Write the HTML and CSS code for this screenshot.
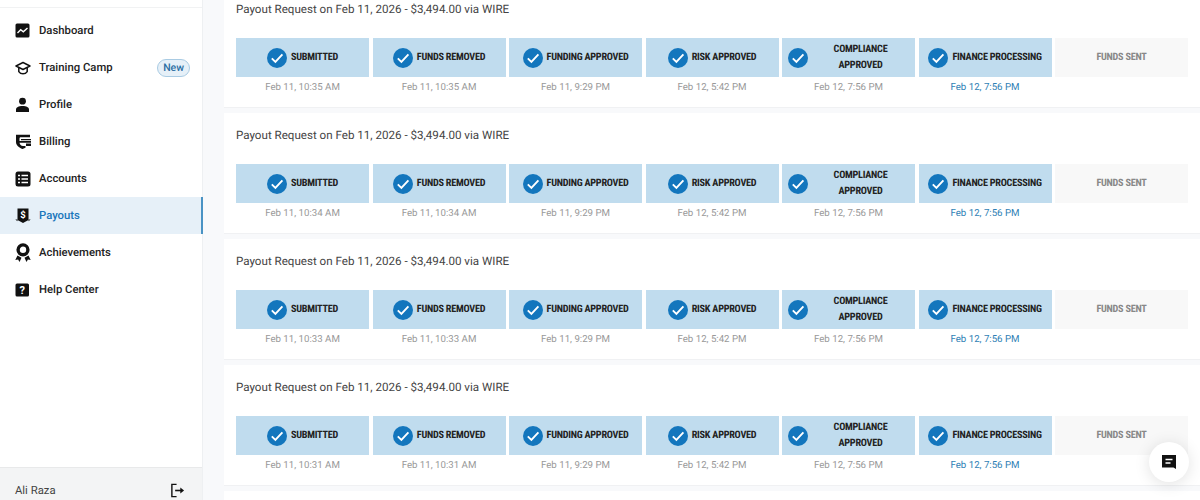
FILE: index.html

```html
<!DOCTYPE html>
<html lang="en">
<head>
    <meta charset="UTF-8">
    <title>Payouts</title>
    <link rel="stylesheet" href="styles.css">
</head>
<body>
    <svg class="defs" width="0" height="0">
        <symbol id="check" viewBox="0 0 20 20">
            <circle cx="10" cy="10" r="10" fill="#1376bd"/>
            <path d="M4.800 10.400l3.600 3.500L15.400 6.400" fill="none" stroke="#fff" stroke-width="1.900"/>
        </symbol>
    </svg>

    <div class="app">
        <aside class="sidebar">
            <div class="sidebar-top"></div>
            <nav class="nav">
                <a class="nav-item">
                    <svg class="nav-icon" viewBox="0 0 16 16"><rect x="0.500" y="0.500" width="14" height="14" rx="1.500" fill="#111"/><path d="M2.500 10l3.200-3.200 2.600 2L12.500 5" fill="none" stroke="#fff" stroke-width="1.400"/></svg>
                    <span>Dashboard</span>
                </a>
                <a class="nav-item">
                    <svg class="nav-icon" viewBox="0 0 16 16"><path d="M8 2.500L1 6l7 3.500L15 6z" fill="none" stroke="#111" stroke-width="1.500" stroke-linejoin="round"/><path d="M3.800 8v3.600c1 1.500 2.600 2.200 4.200 2.200s3.200-.7 4.200-2.200V8" fill="none" stroke="#111" stroke-width="1.500"/></svg>
                    <span>Training Camp</span>
                    <span class="badge">New</span>
                </a>
                <a class="nav-item">
                    <svg class="nav-icon" viewBox="0 0 16 16"><circle cx="7.500" cy="4.200" r="3.400" fill="#111"/><path d="M1 15v-2.500C1 10.300 3.500 9 7.500 9s6.500 1.300 6.500 3.500V15z" fill="#111"/></svg>
                    <span>Profile</span>
                </a>
                <a class="nav-item">
                    <svg class="nav-icon" viewBox="0 0 16 16"><path d="M15 2.500V0.800H1V8c0 3.200 3 5.600 6.500 7l3-1.300V12H8C6 12 4.800 10.500 4.500 8.800H16V7H4.500V4.500C4.500 3.500 5 3.200 6 3.200H15z" fill="#111"/><path d="M6 5h10v1.300H6zM11 9.500h5V12h-5z" fill="#111"/></svg>
                    <span>Billing</span>
                </a>
                <a class="nav-item">
                    <svg class="nav-icon" viewBox="0 0 16 16"><rect x="0.500" y="0.500" width="15" height="15" rx="2.500" fill="#111"/><path d="M3 4.500h2M3 8h2M3 11.500h2M6.500 4.500h6.500M6.500 8h6.500M6.500 11.500h6.500" stroke="#fff" stroke-width="1.500"/></svg>
                    <span>Accounts</span>
                </a>
                <a class="nav-item active">
                    <svg class="nav-icon" viewBox="0 0 16 16"><path d="M2.500 0.500h11v11.500L8 15l-5.500-3z" fill="#111"/><path d="M0.300 11.500h2.200v1.700zM15.700 11.500h-2.200v1.700z" fill="#111"/><text class="glyph" x="8" y="10.300" font-size="9.500">$</text></svg>
                    <span>Payouts</span>
                </a>
                <a class="nav-item">
                    <svg class="nav-icon tall" viewBox="0 0 16 19"><circle cx="8" cy="6.800" r="4.900" fill="none" stroke="#111" stroke-width="3.400"/><path d="M2.500 12.500L0.300 17l2.800-.4L4.500 19l2-4.200zM13.500 12.500l2.200 4.500-2.800-.4-1.400 2.400-2-4.200z" fill="#111"/></svg>
                    <span>Achievements</span>
                </a>
                <a class="nav-item">
                    <svg class="nav-icon" viewBox="0 0 16 16"><rect x="0.500" y="1.500" width="13.500" height="13" rx="1.500" fill="#111"/><text class="glyph" x="7.200" y="12" font-size="11">?</text></svg>
                    <span>Help Center</span>
                </a>
            </nav>
            <div class="user-bar">
                <span>Ali Raza</span>
                <svg class="logout" viewBox="0 0 16 16"><path d="M7 1.500H2v13h5" fill="none" stroke="#111" stroke-width="1.500"/><path d="M5.500 8h6.500" stroke="#111" stroke-width="1.700"/><path d="M11 4.800L15 8l-4 3.200z" fill="#111"/></svg>
            </div>
        </aside>

        <main class="main">
            <section class="card">
                <h3 class="card-title">Payout Request on Feb 11, 2026 - $3,494.00 via WIRE</h3>
                <div class="steps">
                    <div class="step"><div class="tile"><svg class="check"><use href="#check"/></svg><span>SUBMITTED</span></div><p class="date">Feb 11, 10:35 AM</p></div>
                    <div class="step"><div class="tile"><svg class="check"><use href="#check"/></svg><span>FUNDS REMOVED</span></div><p class="date">Feb 11, 10:35 AM</p></div>
                    <div class="step"><div class="tile"><svg class="check"><use href="#check"/></svg><span>FUNDING APPROVED</span></div><p class="date">Feb 11, 9:29 PM</p></div>
                    <div class="step"><div class="tile"><svg class="check"><use href="#check"/></svg><span>RISK APPROVED</span></div><p class="date">Feb 12, 5:42 PM</p></div>
                    <div class="step"><div class="tile wrap"><svg class="check"><use href="#check"/></svg><span>COMPLIANCE APPROVED</span></div><p class="date">Feb 12, 7:56 PM</p></div>
                    <div class="step"><div class="tile"><svg class="check"><use href="#check"/></svg><span>FINANCE PROCESSING</span></div><p class="date current">Feb 12, 7:56 PM</p></div>
                    <div class="step"><div class="tile pending"><span>FUNDS SENT</span></div></div>
                </div>
            </section>

            <section class="card">
                <h3 class="card-title">Payout Request on Feb 11, 2026 - $3,494.00 via WIRE</h3>
                <div class="steps">
                    <div class="step"><div class="tile"><svg class="check"><use href="#check"/></svg><span>SUBMITTED</span></div><p class="date">Feb 11, 10:34 AM</p></div>
                    <div class="step"><div class="tile"><svg class="check"><use href="#check"/></svg><span>FUNDS REMOVED</span></div><p class="date">Feb 11, 10:34 AM</p></div>
                    <div class="step"><div class="tile"><svg class="check"><use href="#check"/></svg><span>FUNDING APPROVED</span></div><p class="date">Feb 11, 9:29 PM</p></div>
                    <div class="step"><div class="tile"><svg class="check"><use href="#check"/></svg><span>RISK APPROVED</span></div><p class="date">Feb 12, 5:42 PM</p></div>
                    <div class="step"><div class="tile wrap"><svg class="check"><use href="#check"/></svg><span>COMPLIANCE APPROVED</span></div><p class="date">Feb 12, 7:56 PM</p></div>
                    <div class="step"><div class="tile"><svg class="check"><use href="#check"/></svg><span>FINANCE PROCESSING</span></div><p class="date current">Feb 12, 7:56 PM</p></div>
                    <div class="step"><div class="tile pending"><span>FUNDS SENT</span></div></div>
                </div>
            </section>

            <section class="card">
                <h3 class="card-title">Payout Request on Feb 11, 2026 - $3,494.00 via WIRE</h3>
                <div class="steps">
                    <div class="step"><div class="tile"><svg class="check"><use href="#check"/></svg><span>SUBMITTED</span></div><p class="date">Feb 11, 10:33 AM</p></div>
                    <div class="step"><div class="tile"><svg class="check"><use href="#check"/></svg><span>FUNDS REMOVED</span></div><p class="date">Feb 11, 10:33 AM</p></div>
                    <div class="step"><div class="tile"><svg class="check"><use href="#check"/></svg><span>FUNDING APPROVED</span></div><p class="date">Feb 11, 9:29 PM</p></div>
                    <div class="step"><div class="tile"><svg class="check"><use href="#check"/></svg><span>RISK APPROVED</span></div><p class="date">Feb 12, 5:42 PM</p></div>
                    <div class="step"><div class="tile wrap"><svg class="check"><use href="#check"/></svg><span>COMPLIANCE APPROVED</span></div><p class="date">Feb 12, 7:56 PM</p></div>
                    <div class="step"><div class="tile"><svg class="check"><use href="#check"/></svg><span>FINANCE PROCESSING</span></div><p class="date current">Feb 12, 7:56 PM</p></div>
                    <div class="step"><div class="tile pending"><span>FUNDS SENT</span></div></div>
                </div>
            </section>

            <section class="card">
                <h3 class="card-title">Payout Request on Feb 11, 2026 - $3,494.00 via WIRE</h3>
                <div class="steps">
                    <div class="step"><div class="tile"><svg class="check"><use href="#check"/></svg><span>SUBMITTED</span></div><p class="date">Feb 11, 10:31 AM</p></div>
                    <div class="step"><div class="tile"><svg class="check"><use href="#check"/></svg><span>FUNDS REMOVED</span></div><p class="date">Feb 11, 10:31 AM</p></div>
                    <div class="step"><div class="tile"><svg class="check"><use href="#check"/></svg><span>FUNDING APPROVED</span></div><p class="date">Feb 11, 9:29 PM</p></div>
                    <div class="step"><div class="tile"><svg class="check"><use href="#check"/></svg><span>RISK APPROVED</span></div><p class="date">Feb 12, 5:42 PM</p></div>
                    <div class="step"><div class="tile wrap"><svg class="check"><use href="#check"/></svg><span>COMPLIANCE APPROVED</span></div><p class="date">Feb 12, 7:56 PM</p></div>
                    <div class="step"><div class="tile"><svg class="check"><use href="#check"/></svg><span>FINANCE PROCESSING</span></div><p class="date current">Feb 12, 7:56 PM</p></div>
                    <div class="step"><div class="tile pending"><span>FUNDS SENT</span></div></div>
                </div>
            </section>

            <section class="card"></section>
        </main>
    </div>

    <button class="chat" type="button" aria-label="Chat">
        <svg viewBox="0 0 16 16"><path d="M1 1h14v14l-2.500-1.500H1z" fill="#111"/><path d="M4.500 5.500h7M4.500 9h5" stroke="#fff" stroke-width="1.500"/></svg>
    </button>
</body>
</html>
```

FILE: styles.css

```css
body {
    font-family: Roboto, "Liberation Sans", sans-serif;
    margin: 0;
    height: 500px;
    overflow: hidden;
    background-color: #f8f9fb;
    color: #222;
    text-rendering: geometricPrecision;
}

.defs {
    position: absolute;
}

.app {
    display: flex;
    height: 500px;
}

/* Sidebar */
.sidebar {
    display: flex;
    flex-direction: column;
    flex: none;
    box-sizing: border-box;
    width: 203px;
    background-color: #fff;
    border-right: 1px solid #eef0f2;
}

.sidebar-top {
    height: 7px;
    border-bottom: 1px solid #f1f2f3;
}

.nav {
    flex: 1;
    padding-top: 4px;
}

.nav-item {
    display: flex;
    align-items: center;
    box-sizing: border-box;
    height: 37px;
    margin-right: -1px;
    padding: 0 13px 0 15px;
    font-size: 11.3px;
    font-weight: 500;
    line-height: 14px;
    color: #222;
}

.nav-icon {
    flex: none;
    width: 16px;
    height: 16px;
    margin-right: 8px;
}

.nav-icon.tall {
    height: 19px;
}

.glyph {
    font-family: Roboto, sans-serif;
    font-weight: 700;
    text-anchor: middle;
    fill: #fff;
}

.nav-item.active {
    background-color: #e6f0f8;
    border-right: 2px solid #4a93c4;
    color: #1a76bb;
}

.badge {
    margin-left: auto;
    padding: 2px 5px;
    font-size: 10.5px;
    line-height: 12px;
    color: #2c6ea3;
    background-color: #e6f0f8;
    border: 1px solid #a9cbe3;
    border-radius: 9px;
}

.user-bar {
    display: flex;
    align-items: center;
    justify-content: space-between;
    box-sizing: border-box;
    height: 33px;
    padding: 13px 17px 0 15px;
    font-size: 11.3px;
    color: #444;
    background-color: #f3f4f5;
    border-top: 1px solid #e8e9ea;
}

.logout {
    width: 15px;
    height: 15px;
}

/* Payout cards */
.main {
    flex: 1;
    display: flex;
    flex-direction: column;
    gap: 5px;
    margin-top: -13px;
    padding-left: 21px;
}

.card {
    flex: none;
    box-sizing: border-box;
    height: 121px;
    padding: 14px 12px 0 12px;
    background-color: #fff;
    border-bottom: 1px solid #f0f1f3;
}

.card-title {
    margin: 0 0 21px;
    font-size: 11.6px;
    font-weight: 400;
    line-height: 16px;
    color: #444;
}

.steps {
    display: grid;
    grid-template-columns: repeat(7, 1fr);
    gap: 3.5px;
}

.tile {
    display: flex;
    align-items: center;
    justify-content: center;
    gap: 4px;
    box-sizing: border-box;
    height: 39px;
    padding: 0 6px;
    font-size: 10.2px;
    font-stretch: 75%;
    font-weight: 700;
    letter-spacing: -0.25px;
    line-height: 16px;
    color: #222;
    background-color: #c0dcee;
}

.tile.wrap span {
    flex: 1;
    padding: 0 12px;
    text-align: center;
}

.tile.pending {
    color: #888;
    background-color: #f8f8f8;
}

.check {
    flex: none;
    width: 20px;
    height: 20px;
}

.date {
    margin: 3px 0 0;
    font-size: 9.7px;
    line-height: 16px;
    text-align: center;
    color: #999;
}

.date.current {
    color: #2f7fb5;
}

/* Chat bubble */
.chat {
    position: absolute;
    left: 1149px;
    top: 442px;
    width: 40px;
    height: 40px;
    padding: 12px;
    background-color: #fff;
    border: none;
    border-radius: 50%;
    box-shadow: 0 2px 16px rgba(0, 0, 0, 0.12);
}
```
